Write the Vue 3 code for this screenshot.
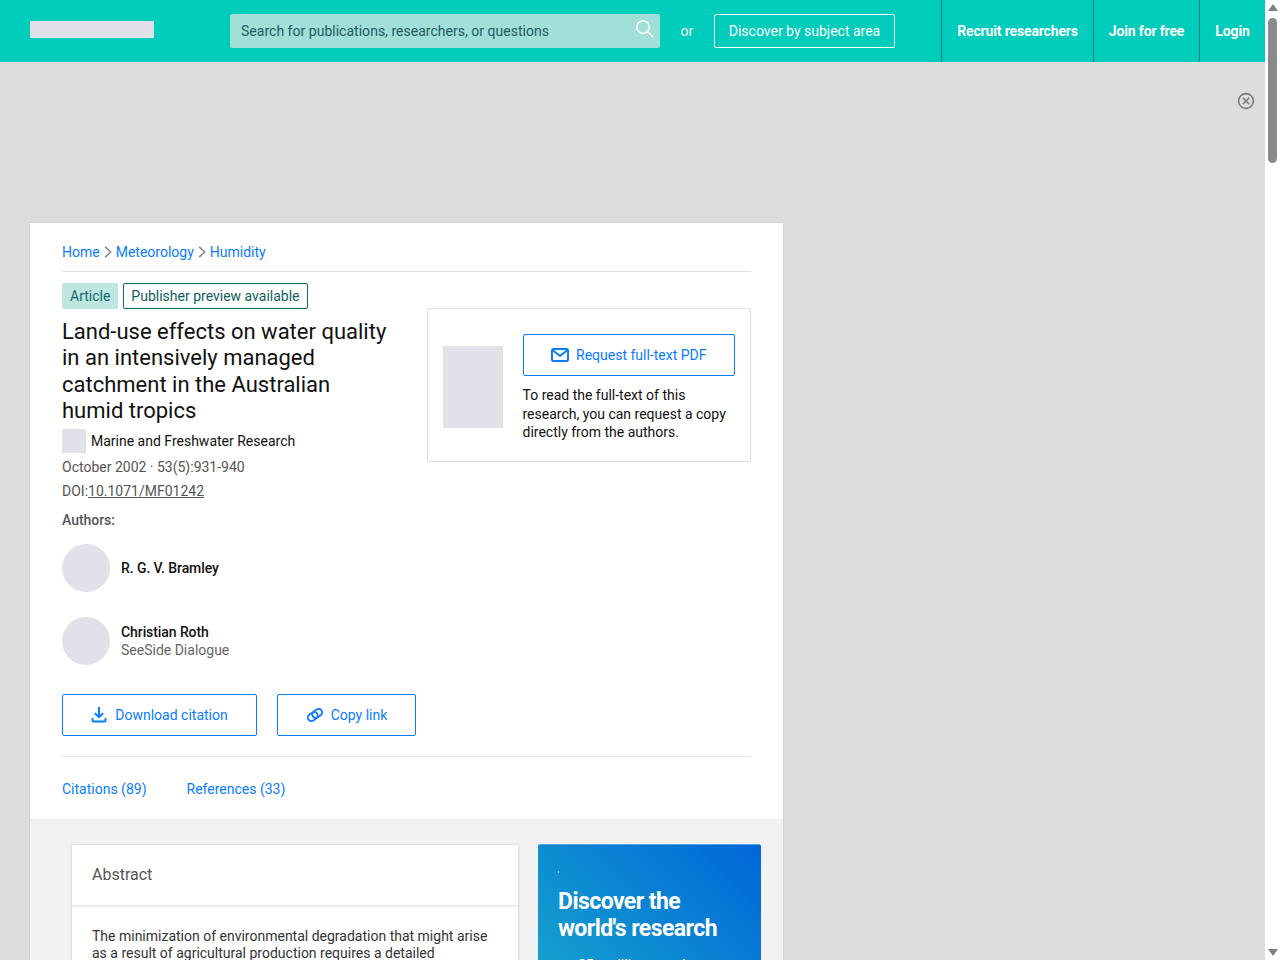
<script setup>
const authors = [
  { name: 'R. G. V. Bramley', org: '' },
  { name: 'Christian Roth', org: 'SeeSide Dialogue' },
]
</script>

<template>
  <div class="root">
    <div class="page">
      <header class="top">
        <div class="logo"></div>
        <div class="search">
          <span class="search-text">Search for publications, researchers, or questions</span>
          <svg class="search-icon" width="20" height="20" viewBox="0 0 20 20" fill="none" stroke="#fff" stroke-width="1.5">
            <circle cx="8" cy="8" r="6.2" />
            <path d="M12.5 12.5 18 18" stroke-linecap="round" />
          </svg>
        </div>
        <span class="or">or</span>
        <a class="discover">Discover by subject area</a>
        <nav class="nav">
          <a class="nav-item recruit">Recruit researchers</a>
          <a class="nav-item join">Join for free</a>
          <a class="nav-item login">Login</a>
        </nav>
      </header>

      <div class="ad">
        <svg class="close" width="18" height="18" viewBox="0 0 18 18" fill="none" stroke="#7b7b7b" stroke-width="1.6">
          <circle cx="9" cy="9" r="7.4" />
          <path d="M5.8 5.800l6.400 6.400M12.200 5.800l-6.400 6.400" />
        </svg>
      </div>

      <main class="card">
        <div class="head">
          <div class="crumbs">
            <a>Home</a>
            <svg width="8" height="12" viewBox="0 0 8 12" fill="none" stroke="#8a8a8a" stroke-width="1.6"><path d="M1.2 .8 6.600 6l-5.400 5.200" /></svg>
            <a>Meteorology</a>
            <svg width="8" height="12" viewBox="0 0 8 12" fill="none" stroke="#8a8a8a" stroke-width="1.6"><path d="M1.2 .8 6.600 6l-5.400 5.200" /></svg>
            <a>Humidity</a>
          </div>

          <div class="cols">
            <div class="left">
              <div class="tags">
                <span class="tag tag-fill">Article</span>
                <span class="tag tag-line">Publisher preview available</span>
              </div>
              <h1 class="title">Land-use effects on water quality<br />in an intensively managed<br />catchment in the Australian<br />humid tropics</h1>
              <div class="journal"><span class="journal-pic"></span><span>Marine and Freshwater Research</span></div>
              <div class="meta date">October 2002 · 53(5):931-940</div>
              <div class="meta doi">DOI:<u>10.1071/MF01242</u></div>
              <div class="authors-label">Authors:</div>
              <div class="author-list">
                <div v-for="a in authors" :key="a.name" class="author">
                  <span class="avatar"></span>
                  <div class="author-text">
                    <div class="author-name">{{ a.name }}</div>
                    <div v-if="a.org" class="author-org">{{ a.org }}</div>
                  </div>
                </div>
              </div>
            </div>

            <aside class="request">
              <div class="request-pic"></div>
              <div class="request-body">
                <a class="btn btn-full">
                  <svg width="18" height="14" viewBox="0 0 18 14" fill="none" stroke="#0a7cff" stroke-width="2">
                    <rect x="1" y="1" width="16" height="12" rx="1.5" />
                    <path d="M1.5 2 9 8l7.5-6" />
                  </svg>
                  Request full-text PDF
                </a>
                <p class="request-text">To read the full-text of this research, you can request a copy directly from the authors.</p>
              </div>
            </aside>
          </div>

          <div class="actions">
            <a class="btn btn-cite">
              <svg width="16" height="17" viewBox="0 0 16 17" fill="none" stroke="#0a7cff" stroke-width="2">
                <path d="M8 1v10M3.800 7.200 8 11.200l4.200-4" />
                <path d="M1.500 12v2.500a1 1 0 0 0 1 1h11a1 1 0 0 0 1-1V12" />
              </svg>
              Download citation
            </a>
            <a class="btn btn-copy">
              <svg width="18" height="14" viewBox="0 0 18 14" fill="none" stroke="#0a7cff" stroke-width="1.8">
                <g transform="rotate(-35 9 7)">
                  <rect x="1" y="3.500" width="10.500" height="7" rx="3.500" />
                  <rect x="6.500" y="3.500" width="10.500" height="7" rx="3.500" />
                </g>
              </svg>
              Copy link
            </a>
          </div>

          <div class="tabs">
            <a>Citations (89)</a>
            <a>References (33)</a>
          </div>
        </div>

        <section class="lower">
          <article class="abstract">
            <h2 class="abstract-title">Abstract</h2>
            <p class="abstract-text">The minimization of environmental degradation that might arise as a result of agricultural production requires a detailed</p>
          </article>
          <aside class="promo">
            <span class="promo-dot"></span>
            <h2 class="promo-title">Discover the<br />world's research</h2>
            <ul class="promo-list"><li>25+ million members</li></ul>
          </aside>
        </section>
      </main>
    </div>

    <div class="scrollbar">
      <span class="arrow arrow-up"></span>
      <span class="thumb"></span>
      <span class="arrow arrow-down"></span>
    </div>
  </div>
</template>

<style>
html, body { margin: 0; height: 960px; overflow: hidden; }
</style>

<style scoped>
.root {
  display: flex;
  width: 1280px;
  height: 960px;
  overflow: hidden;
  font-family: Roboto, "Liberation Sans", sans-serif;
  font-size: 14px;
  line-height: 18px;
  color: #111;
}
.page {
  width: 1265px;
  flex: none;
  background: #ddd;
  overflow: hidden;
}
.top {
  display: flex;
  align-items: center;
  height: 62px;
  padding-left: 30px;
  background: #00ccbb;
  color: #fff;
}
.logo {
  align-self: flex-start;
  width: 124px;
  height: 17px;
  margin: 21px 76px 0 0;
  background: #e1e1ea;
}
.search {
  position: relative;
  box-sizing: border-box;
  width: 430px;
  height: 34px;
  padding: 8px 11px;
  background: #a0e0d9;
  border-radius: 2px;
  color: #1f5a60;
  letter-spacing: 0.02px;
}
.search-icon { position: absolute; right: 5px; top: 5px; }
.or { margin-left: 20.5px; width: 33.5px; }
.discover {
  box-sizing: border-box;
  width: 181px;
  height: 34px;
  line-height: 32px;
  text-align: center;
  border: 1px solid #fff;
  border-radius: 2px;
}
.nav { display: flex; margin-left: 46px; height: 62px; }
.nav-item {
  box-sizing: border-box;
  height: 62px;
  line-height: 62px;
  border-left: 1px solid #04807c;
  font-weight: 700;
  letter-spacing: -0.15px;
  text-align: center;
}
.recruit { width: 152px; }
.join { width: 106px; }
.login { width: 66px; }

.ad { position: relative; height: 161px; }
.close { position: absolute; left: 1237px; top: 30px; }

.card {
  width: 753px;
  margin-left: 30px;
  background: #fff;
  box-shadow: 0 0 2px rgba(0, 0, 0, .12);
}
.head { padding: 20px 32px 0; }
.crumbs {
  display: flex;
  align-items: center;
  gap: 4px;
  box-sizing: border-box;
  height: 29px;
  padding-bottom: 10px;
  border-bottom: 1px solid #dedede;
  color: #0a7cff;
}
.crumbs svg { flex: none; }

.cols { display: flex; align-items: flex-start; }
.left { width: 364.5px; flex: none; padding-top: 11px; }
.tags { display: flex; gap: 5px; height: 26px; }
.tag { box-sizing: border-box; height: 26px; line-height: 24px; padding: 0 7px; border-radius: 2px; color: #0b6a6a; }
.tag-fill { background: #c0e6e2; border: 1px solid #c0e6e2; }
.tag-line { border: 1px solid #0f6b6b; color: #0f6060; }
.title {
  margin: 10px 0 0;
  font-size: 22px;
  line-height: 26.4px;
  font-weight: 400;
  color: #111;
}
.journal { display: flex; align-items: center; gap: 5px; margin-top: 4px; height: 24px; color: #111; }
.journal-pic { width: 24px; height: 24px; background: #e1e1ea; }
.meta { color: #555; height: 18px; }
.date { margin-top: 5px; }
.doi { margin-top: 6px; }
.authors-label { margin-top: 11px; color: #555; font-weight: 500; letter-spacing: -0.05px; }
.author-list { display: flex; flex-direction: column; gap: 25px; margin-top: 15px; }
.author { display: flex; align-items: center; gap: 11px; }
.avatar { width: 48px; height: 48px; border-radius: 50%; background: #e1e1ea; flex: none; }
.author-name { font-weight: 500; color: #111; letter-spacing: -0.08px; }
.author-org { color: #666; }

.request {
  box-sizing: border-box;
  display: flex;
  align-items: flex-start;
  gap: 20px;
  width: 324.5px;
  height: 154px;
  margin-top: 36px;
  padding: 25px 15px 0;
  border: 1px solid #dedede;
  border-radius: 2px;
}
.request-pic { width: 60px; height: 82px; margin-top: 12px; background: #e1e1ea; flex: none; }
.request-body { width: 213px; }
.btn {
  box-sizing: border-box;
  display: flex;
  align-items: center;
  justify-content: center;
  gap: 8px;
  height: 42px;
  border: 1px solid #0a7cff;
  border-radius: 2px;
  color: #0a7cff;
}
.btn-full, .btn-copy { gap: 7px; }
.request-text { margin: 10px 0 0; color: #111; line-height: 18.5px; }
.actions {
  display: flex;
  gap: 20px;
  margin-top: 29px;
  padding-bottom: 20px;
  border-bottom: 1px solid #e6e6e6;
}
.btn-cite { width: 195px; }
.btn-copy { width: 139px; }
.tabs { display: flex; gap: 40px; height: 62px; padding-top: 23px; box-sizing: border-box; color: #0a7cff; }

.lower {
  display: flex;
  align-items: flex-start;
  gap: 20px;
  height: 200px;
  padding: 25px 22px 0 42px;
  background: #f2f2f2;
  border-top: 1px solid #ececec;
}
.abstract {
  width: 446px;
  flex: none;
  height: 200px;
  background: #fff;
  box-shadow: 0 0 3px rgba(0, 0, 0, .18);
}
.abstract-title {
  margin: 0;
  height: 62px;
  padding: 20px 20px 0;
  box-sizing: border-box;
  font-size: 16px;
  line-height: 20px;
  font-weight: 400;
  color: #555;
  border-bottom: 2px solid #eeeeee;
}
.abstract-text { margin: 0; padding: 21px 20px 0; color: #333; line-height: 17.5px; }
.promo {
  width: 223px;
  flex: none;
  height: 200px;
  margin-top: -1px;
  box-sizing: border-box;
  padding: 26px 20px 0;
  background: linear-gradient(225deg, #0066d9 0%, #1aaecb 100%);
  border-top: 1px solid #4ea3e6;
  border-radius: 2px 2px 0 0;
  color: #fff;
}
.promo-dot { display: block; width: 1px; height: 2px; background: #9fd4ee; }
.promo-title {
  margin: 15px 0 0;
  font-size: 23px;
  line-height: 27px;
  font-weight: 700;
  letter-spacing: -0.55px;
}
.promo-list { margin: 14px 0 0; padding: 0 0 0 20px; }

.scrollbar {
  position: relative;
  width: 15px;
  flex: none;
  background: #fff;
}
.thumb {
  position: absolute;
  left: 3px;
  top: 18px;
  width: 9px;
  height: 145px;
  border-radius: 5px;
  background: #8a8a8a;
}
.arrow {
  position: absolute;
  left: 3px;
  width: 0;
  height: 0;
  border-left: 5px solid transparent;
  border-right: 5px solid transparent;
}
.arrow-up { top: 4px; border-bottom: 7px solid #7f7f7f; }
.arrow-down { bottom: 4px; border-top: 7px solid #7f7f7f; }
</style>
